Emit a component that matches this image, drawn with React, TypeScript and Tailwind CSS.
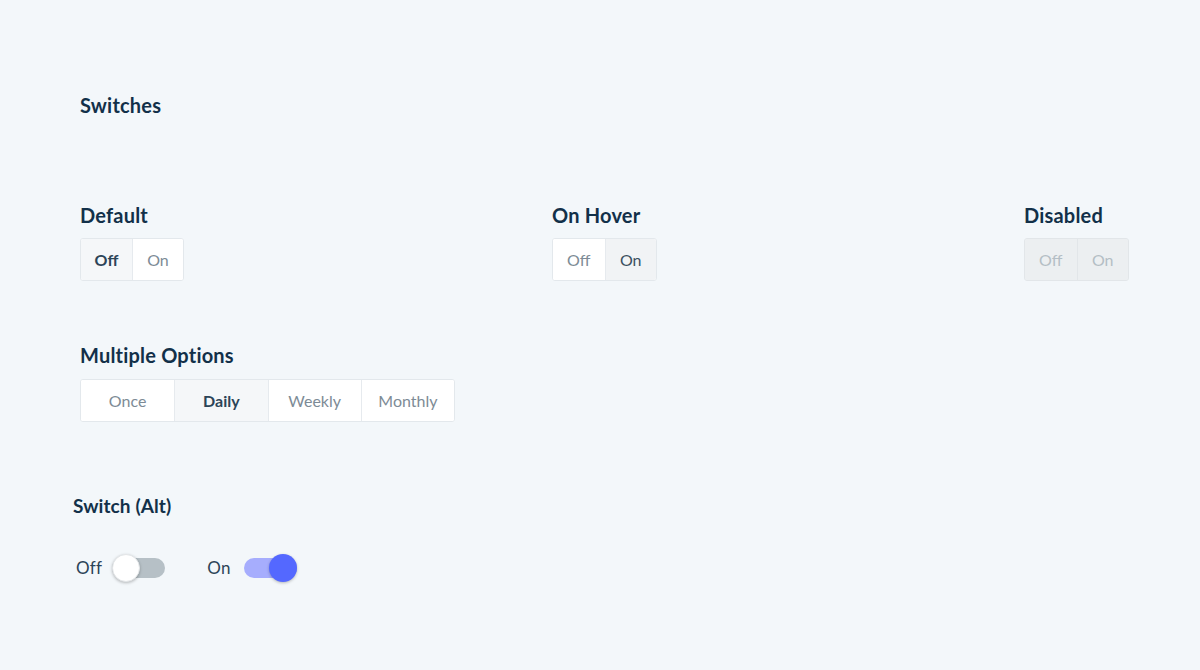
import { useState } from "react";

const font = { fontFamily: "Lato, 'Open Sans', sans-serif" };

type SegProps = {
  options: string[];
  active: number;
  width: string;
  hover?: number;
  disabled?: boolean;
};

function Segmented({ options, active, width, hover, disabled }: SegProps) {
  return (
    <div
      className={`flex h-[43px] border rounded-[3px] overflow-hidden ${
        disabled ? "border-[#e2e6e9] bg-[#eceff1]" : "border-[#e3e8ec] bg-white"
      }`}
    >
      {options.map((opt, i) => {
        const isActive = i === active;
        const isHover = i === hover;
        let cls = "text-[#7d8b96] bg-white";
        if (disabled) cls = "text-[#b4bec5] bg-[#eceff1]";
        else if (isActive) cls = "text-[#2c4458] font-bold bg-[#f5f7f9]";
        else if (isHover) cls = "text-[#3b4f60] bg-[#f1f3f5]";
        return (
          <div
            key={opt}
            className={`${width} flex items-center justify-center text-[16px] ${
              i > 0 ? (disabled ? "border-l border-[#e2e6e9]" : "border-l border-[#e6eaee]") : ""
            } ${cls}`}
          >
            {opt}
          </div>
        );
      })}
    </div>
  );
}

function Toggle({ on }: { on: boolean }) {
  return (
    <div className="relative w-[54px] h-[28px] flex items-center">
      <div className={`w-[53px] h-[20px] rounded-full ${on ? "bg-[#a6adfd]" : "bg-[#b6c0c6]"}`} />
      <div
        className={`absolute top-0 w-[28px] h-[28px] rounded-full shadow-[0_1px_3px_rgba(0,0,0,0.25)] ${
          on ? "right-[1px] bg-[#5468ff]" : "left-0 bg-white border border-[#e3e6e8]"
        }`}
      />
    </div>
  );
}

const heading = "text-[20px] leading-[24px] font-bold text-[#123049] tracking-[0.2px]";

export default function App() {
  const [daily] = useState(1);
  return (
    <div className="w-[1200px] h-[670px] bg-[#f3f7fa] pl-[80px] pt-[93px]" style={font}>
      <h1 className={heading}>Switches</h1>

      {/* Off / On button groups */}
      <div className="grid grid-cols-[472px_472px_auto] mt-[86px]">
        <div>
          <h2 className={heading}>Default</h2>
          <div className="mt-[11px] w-[104px]">
            <Segmented options={["Off", "On"]} active={0} width="w-[52px]" />
          </div>
        </div>
        <div>
          <h2 className={heading}>On Hover</h2>
          <div className="mt-[11px] w-[105px]">
            <Segmented options={["Off", "On"]} active={-1} hover={1} width="w-[52px]" />
          </div>
        </div>
        <div>
          <h2 className={heading}>Disabled</h2>
          <div className="mt-[11px] w-[105px]">
            <Segmented options={["Off", "On"]} active={-1} disabled width="w-[52px]" />
          </div>
        </div>
      </div>

      <div className="mt-[62px]">
        <h2 className={heading}>Multiple Options</h2>
        <div className="mt-[12px] w-[375px]">
          <Segmented options={["Once", "Daily", "Weekly", "Monthly"]} active={daily} width="w-[94px]" />
        </div>
      </div>

      {/* Alt switches */}
      <div className="mt-[73px] -ml-[7px]">
        <h2 className="text-[19px] leading-[22px] font-bold text-[#123049] tracking-[0.1px]">Switch (Alt)</h2>
        <div className="flex items-center mt-[37px] ml-[3px] text-[17px] text-[#2c4458]">
          <span className="tracking-[0.3px]">Off</span>
          <div className="ml-[10px]">
            <Toggle on={false} />
          </div>
          <span className="ml-[41px] tracking-[0.3px]">On</span>
          <div className="ml-[13px]">
            <Toggle on />
          </div>
        </div>
      </div>
    </div>
  );
}
